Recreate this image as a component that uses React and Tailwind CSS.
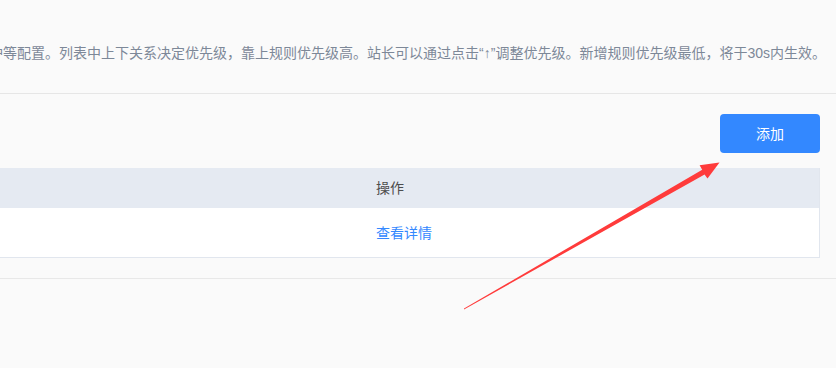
import React from "react";

const font = { fontFamily: '"Liberation Sans", "Noto Sans CJK SC", sans-serif' };

const Arrow = () => (
  <svg className="absolute left-0 top-0 pointer-events-none" width="836" height="368" viewBox="0 0 836 368">
    <polygon
      points="464,309.5 704.6,174.4 707.5,178.6 719.5,162.5 699.6,165.2 702.2,169.8 464,308.5"
      fill="#ff3b3b"
    />
  </svg>
);

export default function App() {
  return (
    <div className="relative w-[836px] h-[368px] overflow-hidden bg-[#fafafa]" style={font}>
      {/* Notice text */}
      <div className="h-[94px] border-b border-[#e6e6e6] flex justify-end overflow-hidden pt-[43px] pr-[10px]">
        <p className="whitespace-nowrap text-sm leading-5 text-[#7d8898] shrink-0">
          护等配置。列表中上下关系决定优先级，靠上规则优先级高。站长可以通过点击“↑”调整优先级。新增规则优先级最低，将于30s内生效。
        </p>
      </div>

      {/* Toolbar + table */}
      <div className="pt-5 pr-4 pb-5 border-b border-[#e8e8e8]">
        <div className="flex justify-end">
          <button className="w-[100px] h-[39px] rounded bg-[#3388ff] text-white text-sm">添加</button>
        </div>

        <div className="mt-[15px] border-r border-b border-[#e1e6ee] bg-white">
          <div className="grid grid-cols-[376px_1fr] h-10 items-center bg-[#e5eaf2] text-sm text-[#4d4d4d]">
            <div></div>
            <div>操作</div>
          </div>
          <div className="grid grid-cols-[376px_1fr] h-[49px] items-center text-sm">
            <div></div>
            <div className="text-[#3388ff]">查看详情</div>
          </div>
        </div>
      </div>

      <Arrow />
    </div>
  );
}
